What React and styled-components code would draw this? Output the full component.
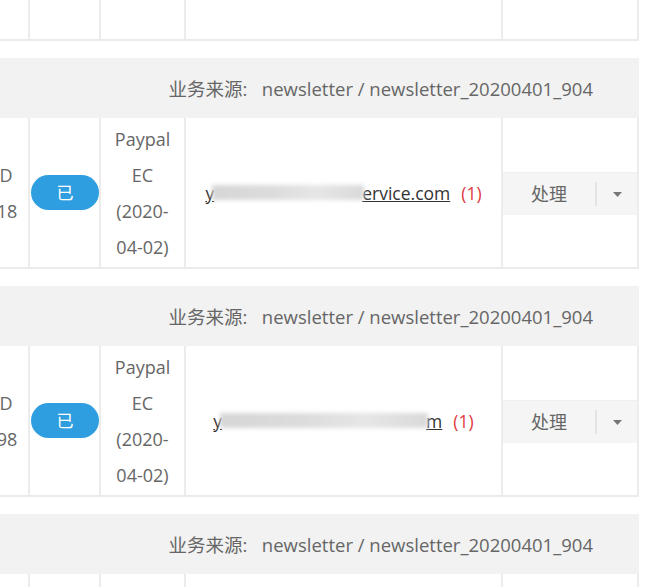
import styled, { createGlobalStyle } from "styled-components";

const GlobalStyle = createGlobalStyle`
  html, body {
    margin: 0;
    padding: 0;
    background: #fff;
    overflow: hidden;
  }
  body {
    font-family: "Open Sans", "Noto Sans CJK SC", sans-serif;
    color: #666;
  }
`;

const Page = styled.div`
  width: 661px;
  height: 587px;
  overflow: hidden;
`;

const Table = styled.div`
  margin-top: -170px;
  margin-left: -100px;
  width: 739px;
`;

const Group = styled.section`
  margin-bottom: 17px;
`;

const SourceBar = styled.div`
  height: 60px;
  background: #f2f2f2;
  display: flex;
  align-items: center;
  justify-content: flex-end;
  padding-right: 46px;
  font-size: 18.5px;
  color: #666;
  white-space: pre;
`;

const Row = styled.div`
  display: grid;
  grid-template-columns: 130px 71px 85px 317px 136px;
  height: 151px;
  border-bottom: 2px solid #ebebeb;
  box-sizing: border-box;
`;

const Cell = styled.div`
  box-sizing: border-box;
  border-right: 2px solid #ececec;
  display: flex;
  align-items: center;
  justify-content: center;
  text-align: center;
  font-size: 18px;
  line-height: 36px;
  color: #666;
`;

const IdCell = styled(Cell)`
  padding-left: 14px;
`;

const Pill = styled.span`
  display: inline-flex;
  align-items: center;
  justify-content: center;
  width: 70px;
  height: 35px;
  border-radius: 18px;
  background: #2e9ee0;
  color: #fff;
  font-size: 17px;
  margin-left: 1px;
`;

const Email = styled.span`
  display: inline-flex;
  align-items: center;
  color: #333;
  text-decoration: underline;
  font-size: 17.5px;
  white-space: nowrap;
`;

const Masked = styled.span`
  display: inline-block;
  width: ${(p) => p.$w}px;
  height: 15px;
  margin: 0 -2px;
  background: linear-gradient(90deg, #d6d6d6, #dcdcdc 40%, #e6e6e6 70%, #d9d9d9);
  filter: blur(2px);
  vertical-align: middle;
`;

const Count = styled.span`
  color: #e0393e;
  margin-left: 11px;
  font-size: 17.5px;
`;

const ActionCell = styled(Cell)`
  align-items: center;
  justify-content: stretch;
`;

const SplitButton = styled.div`
  flex: 1;
  display: flex;
  align-items: center;
  height: 43px;
  margin-top: 2px;
  background: #f5f5f5;
  border-top: 1px solid #efefef;
  box-sizing: border-box;
`;

const MainAction = styled.span`
  width: 92px;
  text-align: center;
  color: #666;
  font-size: 18px;
`;

const Divider = styled.span`
  width: 2px;
  height: 24px;
  background: #e3e3e3;
`;

const Caret = styled.span`
  flex: 1;
  display: flex;
  justify-content: center;
  svg {
    display: block;
  }
`;

const rows = [
  { id: ["ORDER-ID", "202004018"], pay: ["Paypal", "EC"], mask: [152, "ervice.com"] },
  { id: ["ORDER-ID", "202004018"], pay: ["Paypal", "EC", "(2020-", "04-02)"], mask: [152, "ervice.com"] },
  { id: ["ORDER-ID", "202004098"], pay: ["Paypal", "EC", "(2020-", "04-02)"], mask: [208, "m"] },
  { id: ["ORDER-ID", "202004318"], pay: ["Paypal", "EC", "(2020-", "04-02)"], mask: [152, "ervice.com"] },
];

function OrderRow({ data }) {
  return (
    <Row>
      <IdCell>
        {data.id[0]}
        <br />
        {data.id[1]}
      </IdCell>
      <Cell>
        <Pill>已</Pill>
      </Cell>
      <Cell>
        <div>
          {data.pay.map((line) => (
            <div key={line}>{line}</div>
          ))}
        </div>
      </Cell>
      <Cell>
        <Email>
          y<Masked $w={data.mask[0]} />
          {data.mask[1]}
        </Email>
        <Count>(1)</Count>
      </Cell>
      <ActionCell>
        <SplitButton>
          <MainAction>处理</MainAction>
          <Divider />
          <Caret>
            <svg width="9" height="5" viewBox="0 0 9 5">
              <path d="M0 0h9L4.5 5z" fill="#777" />
            </svg>
          </Caret>
        </SplitButton>
      </ActionCell>
    </Row>
  );
}

export default function App() {
  return (
    <Page>
      <GlobalStyle />
      <Table>
        {rows.map((r, i) => (
          <Group key={i}>
            <SourceBar>业务来源:   newsletter / newsletter_20200401_904</SourceBar>
            <OrderRow data={r} />
          </Group>
        ))}
      </Table>
    </Page>
  );
}
